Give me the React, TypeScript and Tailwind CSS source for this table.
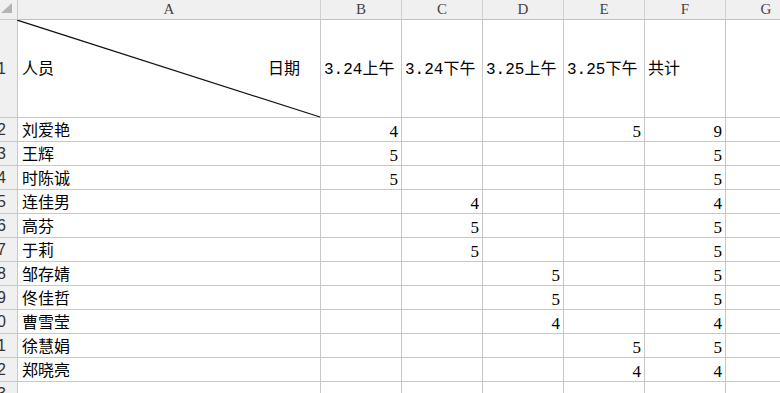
import React from "react";

type Cell = string | number;

const cols = ["A", "B", "C", "D", "E", "F", "G"];
const dates = ["3.24上午", "3.24下午", "3.25上午", "3.25下午", "共计"];

// name, B, C, D, E, F(total)
const rows: Cell[][] = [
  ["刘爱艳", 4, "", "", 5, 9],
  ["王辉", 5, "", "", "", 5],
  ["时陈诚", 5, "", "", "", 5],
  ["连佳男", "", 4, "", "", 4],
  ["高芬", "", 5, "", "", 5],
  ["于莉", "", 5, "", "", 5],
  ["邹存婧", "", "", 5, "", 5],
  ["佟佳哲", "", "", 5, "", 5],
  ["曹雪莹", "", "", 4, "", 4],
  ["徐慧娟", "", "", "", 5, 5],
  ["郑晓亮", "", "", "", 4, 4],
  ["", "", "", "", "", ""],
];

const mono = {
  fontFamily: '"Liberation Mono", "Noto Sans CJK SC", monospace',
};
const serif = {
  fontFamily: '"Liberation Serif", "Noto Sans CJK SC", serif',
};

const grid = "border-r border-b border-[#c8c8c8]";
const colW = ["w-[303px]", "w-[81px]", "w-[81px]", "w-[81px]", "w-[81px]", "w-[81px]", "w-[81px]"];

const RowHead = ({ n, h }: { n: number; h: string }) => (
  <div
    className={`${h} w-[18px] shrink-0 flex items-center justify-end overflow-hidden pr-[11px] bg-[#f0f0f0] border-r border-b border-[#c8c8c8] text-[16px] text-[#333]`}
    style={{ fontFamily: '"Liberation Sans", sans-serif' }}
  >
    <span className="whitespace-nowrap">{n}</span>
  </div>
);

export default function App() {
  return (
    <div className="w-[780px] h-[393px] overflow-hidden bg-white" style={mono}>
      {/* column letters */}
      <div className="flex h-[20px]">
        <div className="w-[18px] shrink-0 relative bg-[#f0f0f0] border-r border-b border-[#c8c8c8]">
          <svg className="absolute left-0 top-0" width="17" height="19">
            <polygon points="1,13 12,3 12,13" fill="#b4b4b4" />
          </svg>
        </div>
        {cols.map((c, i) => (
          <div
            key={c}
            className={`${colW[i]} shrink-0 flex items-center justify-center bg-[#f0f0f0] border-r border-b border-[#d0d0d0] border-b-[#c0c0c0] text-[15px] text-[#444]`}
            style={serif}
          >
            {c}
          </div>
        ))}
      </div>

      {/* header row with the split cell */}
      <div className="flex h-[98px]">
        <RowHead n={1} h="h-[98px]" />
        <div className={`${colW[0]} shrink-0 relative flex items-center justify-between pt-[2px] pl-[4px] pr-[20px] text-[16px] ${grid}`}>
          <span>人员</span>
          <span>日期</span>
          <svg className="absolute -left-px top-0 w-[304px] h-[98px]" viewBox="0 0 304 98" preserveAspectRatio="none">
            <line x1="0" y1="0" x2="303" y2="97" stroke="#111" strokeWidth="1.2" />
          </svg>
        </div>
        {dates.map((d) => (
          <div key={d} className={`w-[81px] shrink-0 flex items-center pt-[2px] pl-[3px] text-[16px] whitespace-nowrap ${grid}`}>
            {d}
          </div>
        ))}
        <div className={`w-[81px] shrink-0 ${grid}`} />
      </div>

      {rows.map((r, ri) => (
        <div key={ri} className="flex h-[24px]">
          <RowHead n={ri + 2} h="h-[24px]" />
          <div className={`${colW[0]} shrink-0 flex items-end pl-[4px] pb-[1px] text-[16px] leading-[16px] ${grid}`}>
            {r[0]}
          </div>
          {r.slice(1).map((v, ci) => (
            <div
              key={ci}
              className={`w-[81px] shrink-0 flex items-end justify-end pr-[3px] pb-[1px] text-[17px] leading-[16px] ${grid}`}
              style={serif}
            >
              {v}
            </div>
          ))}
          <div className={`w-[81px] shrink-0 ${grid}`} />
        </div>
      ))}
    </div>
  );
}
